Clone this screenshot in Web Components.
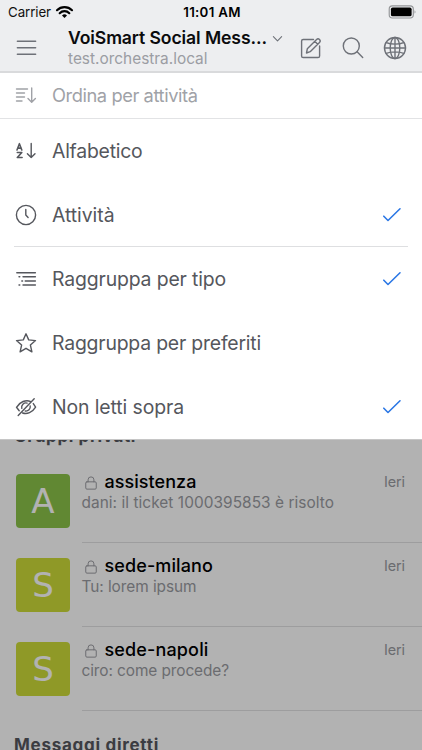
<!DOCTYPE html>
<html lang="it"><head><meta charset="utf-8"><title>VoiSmart Social Messaging</title>
<style>
html,body{margin:0;height:100%;overflow:hidden}
body{font-family:Inter,"Liberation Sans",sans-serif;background:#fff}
</style></head><body>
<voi-app></voi-app>
<script>
const ICONS={
 menu:'<path d="M2.5 5.5h19M2.5 12.2h19M2.5 19h19"/>',
 edit:'<path d="M14.5 3.5H4.2a1.6 1.6 0 0 0-1.6 1.6v14.8a1.6 1.6 0 0 0 1.6 1.6H19a1.6 1.6 0 0 0 1.6-1.6V10"/><path d="m7.5 17 .8-4.2L17.6 3.5a2.05 2.05 0 0 1 2.9 2.9L11.2 15.7zM15.8 5.3l2.9 2.9"/>',
 search:'<circle cx="10.3" cy="10" r="8"/><path d="m16.1 15.8 5.6 5.6"/>',
 globe:'<circle cx="12" cy="12" r="10.5"/><ellipse cx="12" cy="12" rx="4.8" ry="10.5"/><path d="M12 1.5v21M1.5 12h21M3.2 6.6c5 2 12.600 2 17.600 0M3.200 17.400c5-2 12.600-2 17.600 0"/>',
 sort:'<path d="M2.5 6h11M2.5 10h8M2.5 14h8M2.5 18h5.5M17.7 5v14M14 15.5l3.7 3.7 3.7-3.7"/>',
 alpha:'<path d="M3 11 5.4 4.7 7.8 11M3.8 9.1h3.4M3.3 13.5h4.5l-4.5 5h4.8" stroke-width="1.6"/><path d="M17.2 4.5v14M13.4 14.7l3.800 3.800 3.800-3.800"/>',
 clock:'<circle cx="12" cy="12" r="9.6"/><path d="M11.8 6.5V12l2.3 2.5"/>',
 tree:'<path d="M2.8 5.7h18.6M9 9.7h12.4M11.2 14h10.2M9 18h12.4M5 9.7h.8M7.8 14h.8M5 18h.8"/>',
 star:'<path d="m12 2.8 2.7 6.1 6.8.7-5.1 4.5 1.5 6.7-5.9-3.5-5.9 3.5 1.5-6.7L2.5 9.6l6.8-.7z"/>',
 eye:'<path d="M5.200 15.800 2.500 12.300C6 6.500 12 4.600 16.200 6.300M19.300 8.600l2.300 3.500C18.300 17.500 13 19.600 8.600 18M4.200 20.500 20.200 3.800M7.800 13.400a4.300 4.300 0 0 1 5.300-5.300M16.200 11a4.300 4.300 0 0 1-5 5"/>',
 check:'<path d="m3.8 13.2 4.2 4.3L20 5.8"/>',
 chevron:'<path d="m3 8 9 9 9-9"/>',
 lock:'<rect x="3" y="10" width="18" height="12.5" rx="2"/><path d="M7 10V6.5a5 5 0 0 1 10 0V10"/>',
 wifi:'<g fill="currentColor" stroke="none"><path d="M12 21.2 8.5 17.5a5 5 0 0 1 7 0z"/></g><path d="M1.4 10.2a15 15 0 0 1 21.2 0M5.2 14.3a9.6 9.6 0 0 1 13.6 0" stroke-width="3"/>',
 battery:'<rect x=".2" y="5.2" width="21.4" height="10.800" rx="2.8" stroke="#929497" stroke-width="1"/><rect x="1.700" y="6.700" width="18.400" height="7.800" rx="1.5" fill="#000" stroke="none"/><path d="M22.700 9v3c1.100-.4 1.100-2.600 0-3z" fill="#929497" stroke="none"/>'
};
const define=(name,render,after)=>customElements.define(name,class extends HTMLElement{
 connectedCallback(){ if(this.shadowRoot)return; this.attachShadow({mode:'open'}).innerHTML=render(this); if(after)after(this); }
});
define('ui-icon',e=>`<style>:host{display:block;flex:none;line-height:0}svg{display:block;width:100%;height:100%;overflow:visible}</style>
<svg viewBox="0 0 24 24" fill="none" stroke="currentColor" stroke-width="${e.getAttribute('weight')||1.4}" stroke-linecap="round" stroke-linejoin="round">${ICONS[e.getAttribute('name')]}</svg>`);
/* Single-line label whose tracking is adjusted to a given advance width. */
define('ui-text',()=>`<style>:host{display:block;width:max-content;white-space:nowrap}span{display:inline-block}</style><span><slot></slot></span>`,e=>{
 const w=+e.getAttribute('fit'),s=e.shadowRoot.querySelector('span');
 if(w)s.style.letterSpacing=(w-s.getBoundingClientRect().width)/e.textContent.length+'px';
});
define('status-bar',()=>`<style>
:host{display:grid;grid-template-columns:1fr auto 1fr;align-items:center;height:24px;padding:0 6px 0 8px;font-size:13.3px;line-height:24px;color:#111}
.left{display:flex;gap:5px;align-items:center}.left ui-icon{width:17px;height:17px;margin-top:-5px;color:#000}
.left ui-text,.time{margin-top:-3px}
.time{font-weight:600;color:#000}.bat{justify-self:end;width:27px;height:27px}
</style><div class="left"><ui-text fit="43">Carrier</ui-text><ui-icon name="wifi"></ui-icon></div>
<ui-text class="time" fit="57.5">11:01 AM</ui-text><ui-icon class="bat" name="battery"></ui-icon>`);
define('app-header',()=>`<style>
:host{display:block;background:#edeef0;border-bottom:2px solid #d9dadc;height:70.5px}
.bar{display:flex;height:47px;color:#6e7178}
.menu{width:23px;height:23px;margin:12px 0 0 15px}
.names{margin-left:30px;width:202px;padding-top:1px}
.title{font-size:17.6px;line-height:26px;font-weight:600;color:#0b0b0d}
.sub{font-size:15.4px;line-height:17px;margin-top:-1px;color:#9b9da3}
.chev{width:11px;height:11px;margin:9px 0 0 2px}
.tools{display:flex;gap:18px;margin:12px 0 0 16px}.tools ui-icon{width:24px;height:24px}
</style><status-bar></status-bar><div class="bar"><ui-icon class="menu" name="menu" weight="1.6"></ui-icon>
<div class="names"><ui-text class="title" fit="199">VoiSmart Social Mess...</ui-text><ui-text class="sub" fit="139.5">test.orchestra.local</ui-text></div>
<ui-icon class="chev" name="chevron" weight="2.4"></ui-icon>
<div class="tools"><ui-icon name="edit"></ui-icon><ui-icon name="search"></ui-icon><ui-icon name="globe"></ui-icon></div></div>`);
define('menu-item',e=>`<style>
:host{display:flex;align-items:center;height:64px;padding:0 18px 0 14px;color:#55575d;font-size:19.4px}
:host([head]){height:45px;color:#a0a2a7;border-bottom:1px solid #e2e3e5;font-size:18.3px}
ui-icon{width:24px;height:24px}ui-text{margin-left:14px}.check{margin-left:auto;color:#2b77e5}
</style><ui-icon name="${e.getAttribute('icon')}" weight="1.4"></ui-icon><ui-text fit="${e.getAttribute('fit')}">${e.getAttribute('label')}</ui-text>${e.hasAttribute('checked')?'<ui-icon class="check" name="check" weight="1.6"></ui-icon>':''}`);
define('sort-menu',()=>`<style>:host{display:block;background:#fff;box-sizing:border-box;height:366px;overflow:hidden;box-shadow:0 1px 0 #c6c6c6}
hr{margin:-1px 14px 0;border:0;height:1px;background:#dedfe1}</style>
<menu-item head icon="sort" label="Ordina per attività" fit="145.5"></menu-item>
<menu-item icon="alpha" label="Alfabetico" fit="90.5"></menu-item>
<menu-item icon="clock" label="Attività" fit="62.5" checked></menu-item><hr>
<menu-item icon="tree" label="Raggruppa per tipo" fit="174" checked></menu-item>
<menu-item icon="star" label="Raggruppa per preferiti" fit="209" ></menu-item>
<menu-item icon="eye" label="Non letti sopra" fit="132" checked></menu-item>`);
define('chat-row',e=>`<style>
:host{display:flex;height:84.3px;padding-left:16px}
.av{width:54px;height:54px;margin-top:16px;border-radius:4px;background:var(--tint);color:#fff;display:grid;place-items:center;font:34px/54px "DejaVu Sans",sans-serif}
.body{flex:1;margin-left:11.5px;padding:12px 17px 0 0;box-sizing:border-box;height:85.3px;border-bottom:1px solid #e1e1e3}
.line{display:flex;align-items:center;height:23px}.line ui-icon{width:14px;height:14px;margin:3px 7px 0 2px;color:#9a9ba1}
.name{font-size:18px;font-weight:500;line-height:23px;color:#000}.time{font-size:14.4px;color:#9a9ba1;margin-left:auto}
.msg{font-size:15.4px;line-height:20px;color:#9a9ba1}
</style><div class="av">${e.getAttribute('initial')}</div><div class="body"><div class="line"><ui-icon name="lock" weight="1.7"></ui-icon><ui-text class="name" fit="${e.getAttribute('fit')}">${e.getAttribute('name')}</ui-text><ui-text class="time" fit="21">Ieri</ui-text></div><ui-text class="msg" fit="${e.getAttribute('msgfit')}">${e.getAttribute('message')}</ui-text></div>`);
define('chat-list',()=>`<style>:host{display:block;padding-top:351px}
.h{font-size:17px;line-height:24px;font-weight:700;color:#55575d;margin-left:14px}.second{margin-top:22.5px}
chat-row:first-of-type{margin-top:10px}</style>
<ui-text class="h" fit="122">Gruppi privati</ui-text>
<chat-row initial="A" name="assistenza" fit="92" msgfit="252.5" message="dani: il ticket 1000395853 è risolto" style="--tint:#8bc34a"></chat-row>
<chat-row initial="S" name="sede-milano" fit="108.5" msgfit="115" message="Tu: lorem ipsum" style="--tint:#cddc39"></chat-row>
<chat-row initial="S" name="sede-napoli" fit="104" msgfit="147.5" message="ciro: come procede?" style="--tint:#cddc39"></chat-row>
<ui-text class="h second" fit="145">Messaggi diretti</ui-text>`);
define('voi-app',()=>`<style>:host{display:flex;flex-direction:column;height:750px;overflow:hidden}
main{position:relative;flex:1;overflow:hidden}.scrim{position:absolute;inset:0;background:rgba(0,0,0,.3)}
sort-menu{position:absolute;top:0;left:0;right:0}</style>
<app-header></app-header><main><chat-list></chat-list><div class="scrim"></div><sort-menu></sort-menu></main>`);
</script></body></html>
